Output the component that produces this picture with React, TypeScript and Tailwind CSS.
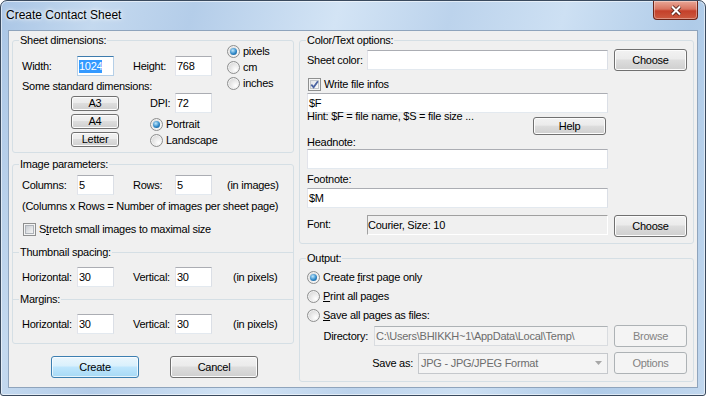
import type { ReactNode } from "react";

const line = "border-[#d5dfe5]";

function TextBox({
  value,
  className = "",
  focused = false,
  selected = false,
  disabled = false,
}: {
  value?: ReactNode;
  className?: string;
  focused?: boolean;
  selected?: boolean;
  disabled?: boolean;
}) {
  const edge = focused
    ? "border-t-[#3d7bad] border-l-[#b5cfe7] border-r-[#b5cfe7] border-b-[#b5cfe7]"
    : disabled
      ? "border-t-[#adb2b5] border-l-[#d9dce0] border-r-[#d9dce0] border-b-[#d9dce0]"
      : "border-t-[#abadb3] border-l-[#e2e3ea] border-r-[#dbdfe6] border-b-[#e3e9ef]";
  return (
    <div
      className={`flex h-[20px] shrink-0 items-center overflow-hidden whitespace-nowrap border pl-[1px] ${edge} ${
        disabled ? "bg-[#f4f4f4] text-[#6d6d6d]" : "bg-white text-black"
      } ${className}`}
    >
      {selected ? <span className="bg-[#3399ff] text-white">{value}</span> : value}
    </div>
  );
}

function Btn({
  children,
  className = "",
  primary = false,
  disabled = false,
}: {
  children: ReactNode;
  className?: string;
  primary?: boolean;
  disabled?: boolean;
}) {
  const skin = disabled
    ? "border-[#adb2b5] bg-[#f4f4f4] text-[#838383]"
    : primary
      ? "border-[#3c7fb1] bg-[linear-gradient(#eaf6fd_0%,#d9f0fc_45%,#bee6fd_50%,#a7d9f5_100%)] shadow-[inset_0_0_0_1px_rgba(255,255,255,0.7)]"
      : "border-[#707070] bg-[linear-gradient(#f2f2f2_0%,#ebebeb_45%,#dddddd_50%,#cfcfcf_100%)] shadow-[inset_0_0_0_1px_#fcfcfc]";
  return (
    <button
      type="button"
      className={`flex shrink-0 items-center justify-center rounded-[3px] border p-0 leading-[13px] ${skin} ${className}`}
    >
      {children}
    </button>
  );
}

function Radio({ checked = false, label, className = "" }: { checked?: boolean; label: ReactNode; className?: string }) {
  return (
    <div className={`flex items-center ${className}`}>
      <span className="flex h-[13px] w-[13px] shrink-0 items-center justify-center rounded-full border border-[#8e8f8f] bg-[radial-gradient(circle_at_70%_70%,#ffffff,#cdcdcd)] shadow-[inset_0_0_0_1px_#f2f2f2]">
        {checked && (
          <span className="h-[7px] w-[7px] rounded-full bg-[radial-gradient(circle_at_40%_35%,#bfe8fc,#2f88c8_55%,#0b4a7e)]" />
        )}
      </span>
      <span className="ml-[3px]">{label}</span>
    </div>
  );
}

function Check({ checked = false, children }: { checked?: boolean; children: ReactNode }) {
  return (
    <div className="flex items-center">
      <span className="flex h-[13px] w-[13px] shrink-0 border border-[#8e8f8f] bg-[#f4f4f4] p-[1px]">
        <span
          className={`relative h-full w-full border ${
            checked
              ? "border-[#c3c7cc] bg-[linear-gradient(135deg,#e2e4e8,#fbfbfb)]"
              : "border-[#aeb3b9] bg-[linear-gradient(135deg,#c9cdd3,#f6f6f6)]"
          }`}
        >
          {checked && (
            <svg className="absolute -left-[1px] -top-[1px] h-[9px] w-[9px] overflow-visible" viewBox="0 0 9 9">
              <path d="M1.3 4.6 L3.6 7.2 L7.9 1.2" fill="none" stroke="#4b64a2" strokeWidth="1.8" />
            </svg>
          )}
        </span>
      </span>
      <span className="ml-[3px]">{children}</span>
    </div>
  );
}

function Group({ title, className = "", children }: { title: string; className?: string; children: ReactNode }) {
  return (
    <fieldset className={`shrink-0 rounded-[3px] border ${line} ${className}`}>
      <legend className="ml-[6px] px-[1px] leading-[13px]">{title}</legend>
      {children}
    </fieldset>
  );
}

function Divider({ title, className = "" }: { title: string; className?: string }) {
  return (
    <div className={`flex items-center ${className}`}>
      <span className={`w-[6px] border-t ${line}`} />
      <span className="px-[1px]">{title}</span>
      <span className={`flex-1 border-t ${line}`} />
    </div>
  );
}

function PairRow({
  a,
  av,
  b,
  bv,
  unit,
  unitGap,
  className = "",
}: {
  a: string;
  av: string;
  b: string;
  bv: string;
  unit?: string;
  unitGap?: string;
  className?: string;
}) {
  return (
    <div className={`flex items-center pl-[9px] ${className}`}>
      <span className="w-[55px]">{a}</span>
      <TextBox value={av} className="w-[37px]" />
      <span className="ml-[19px] w-[42px]">{b}</span>
      <TextBox value={bv} className="w-[37px]" />
      {unit && <span className={unitGap}>{unit}</span>}
    </div>
  );
}

export default function App() {
  return (
    <div className="h-[396px] w-[706px] bg-white font-['Liberation_Sans',Arial,sans-serif] text-[11px] leading-[13px] tracking-[-0.25px] text-black">
      <div className="flex h-[396px] w-[706px] flex-col rounded-t-[7px] rounded-b-[3px] border border-[#3a4a5e] bg-[linear-gradient(105deg,#a9c5e5_0%,#c4d9ef_12%,#b4cde9_24%,#d3e4f5_42%,#bcd3ec_56%,#cde0f3_70%,#afcbe8_86%,#c1d7ee_100%)] shadow-[inset_0_0_0_1px_rgba(255,255,255,0.55)]">
        {/* title bar */}
        <div className="flex h-[29px] shrink-0 items-start justify-between">
          <div className="pl-[5px] pt-[7px] text-[12px] leading-[15px] tracking-normal [text-shadow:0_0_6px_#ffffff,0_0_3px_#ffffff]">
            Create Contact Sheet
          </div>
          <div className="mr-[7px] flex h-[19px] w-[45px] items-center justify-center rounded-b-[4px] border border-t-0 border-[#6b2418] bg-[linear-gradient(#e8a797_0%,#d87460_45%,#c4402a_55%,#cc5a40_100%)] shadow-[inset_0_0_0_1px_rgba(255,255,255,0.35)]">
            <svg width="12" height="11" viewBox="0 0 12 11">
              <path d="M2 1.5 L10 9.5 M10 1.5 L2 9.5" stroke="#4a1a12" strokeWidth="3.8" />
              <path d="M2 1.5 L10 9.5 M10 1.5 L2 9.5" stroke="#ffffff" strokeWidth="2.1" />
            </svg>
          </div>
        </div>

        {/* client area */}
        <div className="ml-[7px] flex h-[358px] w-[690px] shrink-0 border border-[#8fa4bc] bg-[#f0f0f0]">
          {/* left column */}
          <div className="ml-[3px] flex w-[282px] flex-col">
            <Group title="Sheet dimensions:" className="mt-[3px] h-[119px]">
              <div className="flex pl-[9px]">
                <div className="w-[190px]">
                  <div className="mt-[9px] flex items-center">
                    <span className="w-[55px]">Width:</span>
                    <TextBox value="1024" focused selected className="w-[37px]" />
                    <span className="ml-[19px] w-[42px]">Height:</span>
                    <TextBox value="768" className="w-[37px]" />
                  </div>
                  <div className="mt-[4px]">Some standard dimensions:</div>
                  <div className="flex">
                    <div className="ml-[49px] mt-[3px] flex w-[48px] flex-col gap-[3px]">
                      <Btn className="h-[15px] w-[48px]">A3</Btn>
                      <Btn className="h-[15px] w-[48px]">A4</Btn>
                      <Btn className="h-[15px] w-[48px]">Letter</Btn>
                    </div>
                    <div className="ml-[31px]">
                      <div className="flex items-center">
                        <span className="w-[25px]">DPI:</span>
                        <TextBox value="72" className="w-[37px]" />
                      </div>
                      <Radio checked label="Portrait" className="mt-[3px] h-[16px]" />
                      <Radio label="Landscape" className="h-[16px]" />
                    </div>
                  </div>
                </div>
                <div className="-mt-[4px] ml-[15px]">
                  <Radio checked label="pixels" className="h-[16px]" />
                  <Radio label="cm" className="h-[16px]" />
                  <Radio label="inches" className="h-[17px]" />
                </div>
              </div>
            </Group>

            <Group title="Image parameters:" className="mt-[5px] h-[186px]">
              <PairRow a="Columns:" av="5" b="Rows:" bv="5" unit="(in images)" unitGap="ml-[15px]" className="mt-[4px]" />
              <div className="mt-[5px] pl-[9px]">(Columns x Rows = Number of images per sheet page)</div>
              <div className="mt-[10px] pl-[10px]">
                <Check>
                  S<u>t</u>retch small images to maximal size
                </Check>
              </div>
              <Divider title="Thumbnail spacing:" className="mt-[10px]" />
              <PairRow a="Horizontal:" av="30" b="Vertical:" bv="30" unit="(in pixels)" unitGap="ml-[21px]" className="mt-[8px]" />
              <Divider title="Margins:" className="mt-[6px]" />
              <PairRow a="Horizontal:" av="30" b="Vertical:" bv="30" unit="(in pixels)" unitGap="ml-[21px]" className="mt-[8px]" />
            </Group>

            <div className="mt-[12px] flex pl-[39px]">
              <Btn primary className="h-[22px] w-[88px]">
                Create
              </Btn>
              <Btn className="ml-[31px] h-[22px] w-[88px]">Cancel</Btn>
            </div>
          </div>

          {/* right column */}
          <div className="ml-[5px] flex w-[395px] flex-col">
            <Group title="Color/Text options:" className="mt-[3px] h-[210px]">
              <div className="mt-[2px] flex items-center pl-[7px]">
                <span className="w-[60px]">Sheet color:</span>
                <TextBox className="w-[241px]" />
                <Btn className="ml-[6px] h-[22px] w-[73px]">Choose</Btn>
              </div>
              <div className="mt-[7px] pl-[8px]">
                <Check checked>Write file infos</Check>
              </div>
              <TextBox value="$F" className="ml-[7px] mt-[2px] w-[301px]" />
              <div className="flex items-start pl-[7px]">
                <span className="-mt-[3px] w-[226px]">Hint: $F = file name, $S = file size ...</span>
                <Btn className="mt-[4px] h-[18px] w-[73px]">Help</Btn>
              </div>
              <div className="mt-[1px] pl-[7px]">Headnote:</div>
              <TextBox className="ml-[7px] w-[301px]" />
              <div className="mt-[4px] pl-[7px]">Footnote:</div>
              <TextBox value="$M" className="ml-[7px] mt-[2px] w-[301px]" />
              <div className="mt-[7px] flex items-start pl-[7px]">
                <span className="mt-[3px] w-[60px]">Font:</span>
                <div className="flex h-[20px] w-[241px] items-center border border-t-[#a0a0a0] border-l-[#a0a0a0] border-r-[#ffffff] border-b-[#ffffff] bg-[#f0f0f0]">
                  Courier, Size: 10
                </div>
                <Btn className="ml-[6px] h-[22px] w-[73px]">Choose</Btn>
              </div>
            </Group>

            <Group title="Output:" className="mt-[8px] h-[130px]">
              <div className="mt-[3px] pl-[7px]">
                <Radio
                  checked
                  className="h-[19px]"
                  label={
                    <>
                      Create <u>f</u>irst page only
                    </>
                  }
                />
                <Radio
                  className="h-[19px]"
                  label={
                    <>
                      <u>P</u>rint all pages
                    </>
                  }
                />
                <Radio
                  className="h-[19px]"
                  label={
                    <>
                      <u>S</u>ave all pages as files:
                    </>
                  }
                />
              </div>
              <div className="flex h-[22px] items-center pl-[7px]">
                <span className="w-[61px] text-right">Directory:</span>
                <TextBox disabled value="C:\Users\BHIKKH~1\AppData\Local\Temp\" className="ml-[6px] w-[234px]" />
                <Btn disabled className="ml-[6px] h-[22px] w-[73px]">
                  Browse
                </Btn>
              </div>
              <div className="mt-[5px] flex h-[22px] items-center pl-[7px]">
                <span className="w-[106px] text-right">Save as:</span>
                <div className="ml-[5px] flex h-[21px] w-[190px] items-center justify-between border border-[#c5c8cc] bg-[#f4f4f4] pl-[2px] pr-[5px] text-[#6d6d6d]">
                  <span>JPG - JPG/JPEG Format</span>
                  <svg width="7" height="4" viewBox="0 0 7 4">
                    <path d="M0 0 H7 L3.5 4 Z" fill="#a7a7a7" />
                  </svg>
                </div>
                <Btn disabled className="ml-[6px] h-[22px] w-[73px]">
                  Options
                </Btn>
              </div>
            </Group>
          </div>
        </div>
      </div>
    </div>
  );
}
